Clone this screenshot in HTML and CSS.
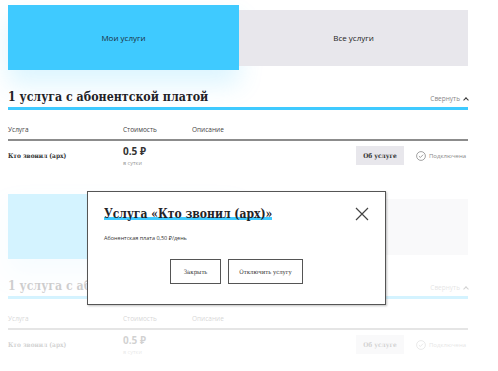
FILE: index.html
```html
<!DOCTYPE html>
<html lang="ru">
<head>
  <meta charset="UTF-8">
  <meta name="viewport" content="width=device-width, initial-scale=1.0">
  <title>Мои услуги</title>
  <link rel="stylesheet" href="styles.css">
</head>
<body>

  <div class="page">
    <div class="screen">
      <div class="tabs">
        <div class="tab tab-active">Мои услуги</div>
        <div class="tab">Все услуги</div>
      </div>

      <div class="section-head">
        <h2>1 услуга с абонентской платой</h2>
        <span class="collapse">Свернуть <span class="caret"></span></span>
      </div>

      <div class="table-head">
        <span class="col-name">Услуга</span>
        <span class="col-price">Стоимость</span>
        <span class="col-desc">Описание</span>
      </div>

      <div class="service-row">
        <span class="col-name service-name">Кто звонил (арх)</span>
        <div class="col-price">
          <div class="price">0.5 ₽</div>
          <div class="period">в сутки</div>
        </div>
        <span class="col-desc"></span>
        <button class="about">Об услуге</button>
        <span class="status">
          <svg width="10" height="10" viewBox="0 0 10 10"><circle cx="5" cy="5" r="4.4" fill="none" stroke="#8a8a8a" stroke-width="0.8"/><path d="M2.9 5.1 L4.4 6.5 L7.1 3.7" fill="none" stroke="#8a8a8a" stroke-width="0.8"/></svg>
          Подключена
        </span>
      </div>
    </div>

    <div class="screen faded">
      <div class="tabs">
        <div class="tab tab-active">Мои услуги</div>
        <div class="tab">Все услуги</div>
      </div>

      <div class="section-head">
        <h2>1 услуга с абонентской платой</h2>
        <span class="collapse">Свернуть <span class="caret"></span></span>
      </div>

      <div class="table-head">
        <span class="col-name">Услуга</span>
        <span class="col-price">Стоимость</span>
        <span class="col-desc">Описание</span>
      </div>

      <div class="service-row">
        <span class="col-name service-name">Кто звонил (арх)</span>
        <div class="col-price">
          <div class="price">0.5 ₽</div>
          <div class="period">в сутки</div>
        </div>
        <span class="col-desc"></span>
        <button class="about">Об услуге</button>
        <span class="status">
          <svg width="10" height="10" viewBox="0 0 10 10"><circle cx="5" cy="5" r="4.4" fill="none" stroke="#8a8a8a" stroke-width="0.8"/><path d="M2.9 5.1 L4.4 6.5 L7.1 3.7" fill="none" stroke="#8a8a8a" stroke-width="0.8"/></svg>
          Подключена
        </span>
      </div>
    </div>

    <div class="modal">
      <div class="modal-head">
        <h3><span class="mark">Услуга «Кто звонил (арх)»</span></h3>
        <svg class="close" width="14" height="14" viewBox="0 0 14 14"><path d="M1 1 L13 13 M13 1 L1 13" stroke="#444" stroke-width="1.2"/></svg>
      </div>
      <p class="modal-text">Абонентская плата 0,50 ₽/день</p>
      <div class="modal-buttons">
        <button class="outline">Закрыть</button>
        <button class="outline">Отключить услугу</button>
      </div>
    </div>
  </div>

</body>
</html>
```

FILE: styles.css
```css
body {
  margin: 0;
  background-color: #fff;
  font-family: 'Open Sans', 'Noto Sans', sans-serif;
  color: #333;
}
.page {
  position: relative;
  width: 498px;
  height: 371px;
  overflow: hidden;
}
.screen {
  padding: 5px 30px 0 8px;
  height: 184px;
}
.faded {
  opacity: 0.22;
  padding-top: 5px;
}
.tabs {
  display: flex;
  align-items: center;
}
.tab {
  width: 229px;
  height: 56px;
  background-color: #e8e7ec;
  display: flex;
  align-items: center;
  justify-content: center;
  font-size: 8px;
  color: #222;
}
.tab-active {
  width: 231px;
  height: 65px;
  background-color: #3fcaff;
  color: #1a2e3a;
  box-shadow: 0 14px 24px rgba(63, 202, 255, 0.18);
}
.section-head {
  display: flex;
  justify-content: space-between;
  align-items: flex-end;
  margin-top: 18px;
  border-bottom: 3px solid #3fcaff;
  padding-bottom: 1px;
}
h2 {
  margin: 0;
  font-family: 'DejaVu Serif Condensed', 'DejaVu Serif', serif;
  font-size: 12.3px;
  font-weight: bold;
  color: #1f2226;
  line-height: 18px;
}
.collapse {
  font-size: 6.5px;
  color: #888;
  padding-bottom: 3px;
  display: flex;
  align-items: center;
  gap: 4px;
}
.caret {
  width: 3px;
  height: 3px;
  border-top: 1.2px solid #333;
  border-left: 1.2px solid #333;
  transform: rotate(45deg);
  margin-top: 2px;
}
.table-head {
  display: flex;
  font-size: 6.5px;
  color: #444;
  margin-top: 15px;
  padding-bottom: 5px;
  border-bottom: 2px solid #8c8c8c;
}
.col-name {
  width: 115px;
}
.col-price {
  width: 69px;
}
.col-desc {
  flex: 1;
}
.service-row {
  display: flex;
  align-items: center;
  padding-top: 3px;
}
.service-name {
  font-family: 'DejaVu Serif Condensed', 'DejaVu Serif', serif;
  font-weight: bold;
  font-size: 6.5px;
  color: #333;
}
.price {
  font-size: 10px;
  font-weight: bold;
  color: #333;
}
.period {
  font-size: 5.5px;
  color: #999;
  margin-top: 1px;
}
.about {
  width: 48px;
  height: 19px;
  border: none;
  background-color: #e8e7ec;
  font-family: 'DejaVu Serif Condensed', 'DejaVu Serif', serif;
  font-weight: bold;
  font-size: 6.5px;
  color: #333;
  padding: 0;
  margin-right: 12px;
}
.status {
  display: flex;
  align-items: center;
  gap: 3px;
  font-size: 6px;
  color: #888;
  width: 52px;
}
.modal {
  position: absolute;
  left: 87px;
  top: 191px;
  width: 299px;
  height: 114px;
  background-color: #fff;
  border: 1px solid #555;
  box-shadow: 1px 1px 2px rgba(0, 0, 0, 0.25);
  padding: 0 16px 0 16px;
  box-sizing: border-box;
}
.modal-head {
  display: flex;
  justify-content: space-between;
  align-items: center;
  margin-top: 15px;
}
h3 {
  margin: 0;
  font-family: 'DejaVu Serif Condensed', 'DejaVu Serif', serif;
  font-weight: bold;
  font-size: 12px;
  color: #1f2226;
}
.mark {
  background: linear-gradient(to top, transparent 0, transparent 1px, #3fcaff 1px, #3fcaff 4px, transparent 4px);
}
.modal-text {
  margin: 13px 0 0;
  font-size: 5.5px;
  color: #333;
}
.modal-buttons {
  display: flex;
  justify-content: center;
  gap: 7px;
  margin-top: 17px;
}
.outline {
  height: 25px;
  border: 1px solid #555;
  background-color: #fff;
  font-family: 'DejaVu Serif Condensed', 'DejaVu Serif', serif;
  font-size: 6px;
  color: #333;
  padding: 0 8px;
}
.outline:first-child {
  width: 51px;
}
.outline:last-child {
  width: 75px;
}
```
